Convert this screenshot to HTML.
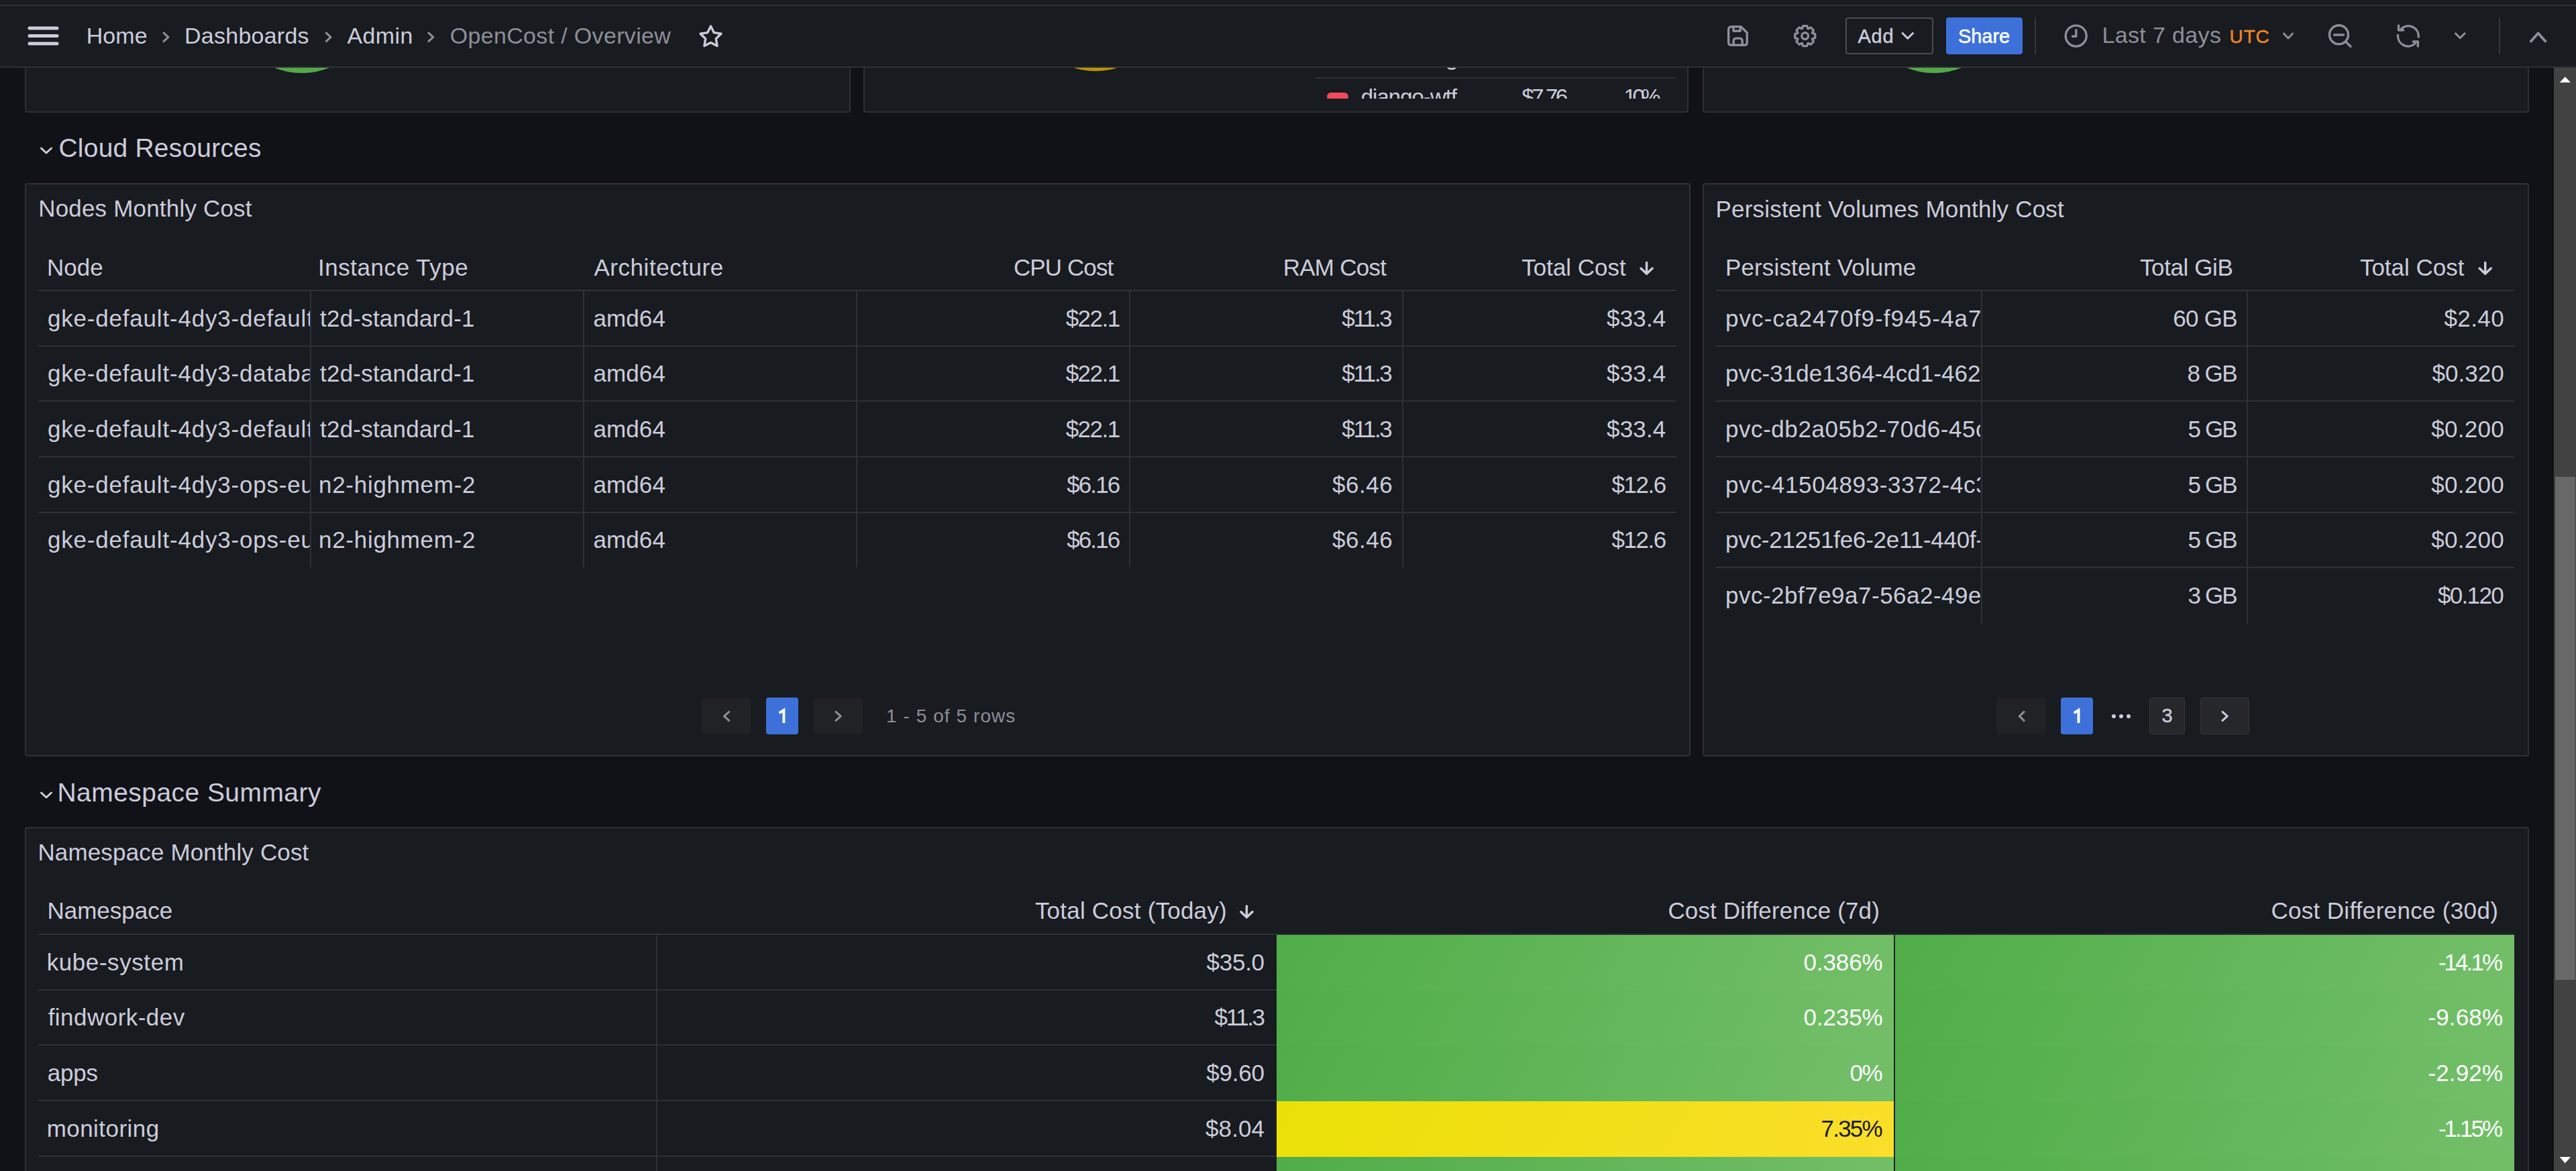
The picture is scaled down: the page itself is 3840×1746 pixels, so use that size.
<!DOCTYPE html>
<html><head><meta charset="utf-8"><style>
html,body{margin:0;padding:0;width:3840px;height:1746px;overflow:hidden;background:#111217;font-family:"Liberation Sans", sans-serif;-webkit-font-smoothing:antialiased;}
</style></head><body>
<div style="position:absolute;left:0;top:101px;width:3807px;height:1645px;overflow:hidden"><div style="position:absolute;left:0;top:-101px;width:3840px;height:1746px">
<div style="position:absolute;left:37px;top:-200px;width:1227px;height:364px;background:#181b1f;border:2px solid #2e3036;border-radius:4px;"></div>
<div style="position:absolute;left:1287px;top:-200px;width:1226px;height:364px;background:#181b1f;border:2px solid #2e3036;border-radius:4px;"></div>
<div style="position:absolute;left:2538px;top:-200px;width:1228px;height:364px;background:#181b1f;border:2px solid #2e3036;border-radius:4px;"></div>
<div style="position:absolute;left:340.5px;top:-109px;width:218px;height:218px;border-radius:50%;background:#55a64a"></div>
<div style="position:absolute;left:1527px;top:-106px;width:212px;height:212px;border-radius:50%;background:#b8940b"></div>
<div style="position:absolute;left:2774.3px;top:-109px;width:218px;height:218px;border-radius:50%;background:#55a64a"></div>
<div style="position:absolute;left:1960px;top:115px;width:537px;height:2px;background:#2e3036;"></div>
<div style="position:absolute;left:1287px;top:101px;width:1230px;height:46px;overflow:hidden"><div style="position:absolute;left:-1287px;top:-101px;width:3840px;height:300px">
<div style="position:absolute;left:1978px;top:138px;width:32px;height:12px;background:#f2495c;border-radius:6px;"></div>
<div style="position:absolute;left:2028.70px;top:127.75px;font-size:33px;line-height:33px;color:#ccccdc;white-space:pre;letter-spacing:-0.976px;">django-wtf</div>
<div style="position:absolute;left:2268.40px;top:127.75px;font-size:33px;line-height:33px;color:#ccccdc;white-space:pre;letter-spacing:-3.407px;">$7.76</div>
<div style="position:absolute;left:2420.60px;top:127.75px;font-size:33px;line-height:33px;color:#ccccdc;white-space:pre;letter-spacing:-5.503px;">10%</div>
<div style="position:absolute;left:2154.50px;top:66.75px;font-size:35px;line-height:35px;color:#ccccdc;white-space:pre;">g</div>
</div></div>
<svg style="position:absolute;left:58px;top:214px" width="24" height="16" viewBox="58 214 24 16"><polyline points="61.5,221 69,228 76.5,221" fill="none" stroke="#ccccdc" stroke-width="3" stroke-linecap="round" stroke-linejoin="round"/></svg>
<div style="position:absolute;left:87.50px;top:200.85px;font-size:39px;line-height:39px;color:#ccccdc;white-space:pre;letter-spacing:0.204px;">Cloud Resources</div>
<div style="position:absolute;left:37px;top:273px;width:2479px;height:851px;background:#181b1f;border:2px solid #2e3036;border-radius:4px;"></div>
<div style="position:absolute;left:57.20px;top:293.25px;font-size:35px;line-height:35px;color:#ccccdc;white-space:pre;letter-spacing:0.187px;">Nodes Monthly Cost</div>
<div style="position:absolute;left:70.00px;top:380.75px;font-size:35px;line-height:35px;color:#ccccdc;white-space:pre;">Node</div>
<div style="position:absolute;left:474.00px;top:380.75px;font-size:35px;line-height:35px;color:#ccccdc;white-space:pre;letter-spacing:0.546px;">Instance Type</div>
<div style="position:absolute;left:885.40px;top:380.75px;font-size:35px;line-height:35px;color:#ccccdc;white-space:pre;letter-spacing:0.557px;">Architecture</div>
<div style="position:absolute;left:1511.00px;top:380.75px;font-size:35px;line-height:35px;color:#ccccdc;white-space:pre;letter-spacing:-0.909px;">CPU Cost</div>
<div style="position:absolute;left:1912.70px;top:380.75px;font-size:35px;line-height:35px;color:#ccccdc;white-space:pre;letter-spacing:-0.734px;">RAM Cost</div>
<div style="position:absolute;left:2268.30px;top:380.75px;font-size:35px;line-height:35px;color:#ccccdc;white-space:pre;letter-spacing:-0.033px;">Total Cost</div>
<svg style="position:absolute;left:2440px;top:382px" width="32" height="34" viewBox="2440 382 32 34"><path d="M2454.6,391.5 V408.3 M2446.0,400.1 L2454.6,408.3 L2463.2,400.1" fill="none" stroke="#ccccdc" stroke-width="3.5" stroke-linecap="round" stroke-linejoin="round"/></svg>
<div style="position:absolute;left:57px;top:432px;width:2442px;height:2px;background:#2e3036;"></div>
<div style="position:absolute;left:57px;top:434px;width:405px;height:82px;overflow:hidden"><div style="position:absolute;left:-57px;top:-434px"><div style="position:absolute;left:71.00px;top:456.55px;font-size:35px;line-height:35px;color:#ccccdc;white-space:pre;letter-spacing:0.800px;">gke-default-4dy3-default</div></div></div>
<div style="position:absolute;left:477.00px;top:456.55px;font-size:35px;line-height:35px;color:#ccccdc;white-space:pre;letter-spacing:0.218px;">t2d-standard-1</div>
<div style="position:absolute;left:884.60px;top:456.55px;font-size:35px;line-height:35px;color:#ccccdc;white-space:pre;letter-spacing:0.062px;">amd64</div>
<div style="position:absolute;left:1588.70px;top:456.55px;font-size:35px;line-height:35px;color:#ccccdc;white-space:pre;letter-spacing:-1.530px;">$22.1</div>
<div style="position:absolute;left:2000.30px;top:456.55px;font-size:35px;line-height:35px;color:#ccccdc;white-space:pre;letter-spacing:-2.381px;">$11.3</div>
<div style="position:absolute;left:2395.00px;top:456.55px;font-size:35px;line-height:35px;color:#ccccdc;white-space:pre;letter-spacing:0.170px;">$33.4</div>
<div style="position:absolute;left:57px;top:515px;width:2442px;height:2px;background:#2e3036;"></div>
<div style="position:absolute;left:57px;top:516px;width:405px;height:83px;overflow:hidden"><div style="position:absolute;left:-57px;top:-516px"><div style="position:absolute;left:71.00px;top:539.20px;font-size:35px;line-height:35px;color:#ccccdc;white-space:pre;letter-spacing:0.800px;">gke-default-4dy3-database</div></div></div>
<div style="position:absolute;left:477.00px;top:539.20px;font-size:35px;line-height:35px;color:#ccccdc;white-space:pre;letter-spacing:0.218px;">t2d-standard-1</div>
<div style="position:absolute;left:884.60px;top:539.20px;font-size:35px;line-height:35px;color:#ccccdc;white-space:pre;letter-spacing:0.062px;">amd64</div>
<div style="position:absolute;left:1588.70px;top:539.20px;font-size:35px;line-height:35px;color:#ccccdc;white-space:pre;letter-spacing:-1.530px;">$22.1</div>
<div style="position:absolute;left:2000.30px;top:539.20px;font-size:35px;line-height:35px;color:#ccccdc;white-space:pre;letter-spacing:-2.381px;">$11.3</div>
<div style="position:absolute;left:2395.00px;top:539.20px;font-size:35px;line-height:35px;color:#ccccdc;white-space:pre;letter-spacing:0.170px;">$33.4</div>
<div style="position:absolute;left:57px;top:597px;width:2442px;height:2px;background:#2e3036;"></div>
<div style="position:absolute;left:57px;top:599px;width:405px;height:82px;overflow:hidden"><div style="position:absolute;left:-57px;top:-599px"><div style="position:absolute;left:71.00px;top:621.85px;font-size:35px;line-height:35px;color:#ccccdc;white-space:pre;letter-spacing:0.800px;">gke-default-4dy3-default</div></div></div>
<div style="position:absolute;left:477.00px;top:621.85px;font-size:35px;line-height:35px;color:#ccccdc;white-space:pre;letter-spacing:0.218px;">t2d-standard-1</div>
<div style="position:absolute;left:884.60px;top:621.85px;font-size:35px;line-height:35px;color:#ccccdc;white-space:pre;letter-spacing:0.062px;">amd64</div>
<div style="position:absolute;left:1588.70px;top:621.85px;font-size:35px;line-height:35px;color:#ccccdc;white-space:pre;letter-spacing:-1.530px;">$22.1</div>
<div style="position:absolute;left:2000.30px;top:621.85px;font-size:35px;line-height:35px;color:#ccccdc;white-space:pre;letter-spacing:-2.381px;">$11.3</div>
<div style="position:absolute;left:2395.00px;top:621.85px;font-size:35px;line-height:35px;color:#ccccdc;white-space:pre;letter-spacing:0.170px;">$33.4</div>
<div style="position:absolute;left:57px;top:680px;width:2442px;height:2px;background:#2e3036;"></div>
<div style="position:absolute;left:57px;top:681px;width:405px;height:83px;overflow:hidden"><div style="position:absolute;left:-57px;top:-681px"><div style="position:absolute;left:71.00px;top:704.50px;font-size:35px;line-height:35px;color:#ccccdc;white-space:pre;letter-spacing:0.800px;">gke-default-4dy3-ops-eu</div></div></div>
<div style="position:absolute;left:475.00px;top:704.50px;font-size:35px;line-height:35px;color:#ccccdc;white-space:pre;letter-spacing:0.710px;">n2-highmem-2</div>
<div style="position:absolute;left:884.60px;top:704.50px;font-size:35px;line-height:35px;color:#ccccdc;white-space:pre;letter-spacing:0.062px;">amd64</div>
<div style="position:absolute;left:1590.20px;top:704.50px;font-size:35px;line-height:35px;color:#ccccdc;white-space:pre;letter-spacing:-1.905px;">$6.16</div>
<div style="position:absolute;left:1986.00px;top:704.50px;font-size:35px;line-height:35px;color:#ccccdc;white-space:pre;letter-spacing:0.545px;">$6.46</div>
<div style="position:absolute;left:2402.40px;top:704.50px;font-size:35px;line-height:35px;color:#ccccdc;white-space:pre;letter-spacing:-1.430px;">$12.6</div>
<div style="position:absolute;left:57px;top:763px;width:2442px;height:2px;background:#2e3036;"></div>
<div style="position:absolute;left:57px;top:764px;width:405px;height:83px;overflow:hidden"><div style="position:absolute;left:-57px;top:-764px"><div style="position:absolute;left:71.00px;top:787.15px;font-size:35px;line-height:35px;color:#ccccdc;white-space:pre;letter-spacing:0.800px;">gke-default-4dy3-ops-eu</div></div></div>
<div style="position:absolute;left:475.00px;top:787.15px;font-size:35px;line-height:35px;color:#ccccdc;white-space:pre;letter-spacing:0.710px;">n2-highmem-2</div>
<div style="position:absolute;left:884.60px;top:787.15px;font-size:35px;line-height:35px;color:#ccccdc;white-space:pre;letter-spacing:0.062px;">amd64</div>
<div style="position:absolute;left:1590.20px;top:787.15px;font-size:35px;line-height:35px;color:#ccccdc;white-space:pre;letter-spacing:-1.905px;">$6.16</div>
<div style="position:absolute;left:1986.00px;top:787.15px;font-size:35px;line-height:35px;color:#ccccdc;white-space:pre;letter-spacing:0.545px;">$6.46</div>
<div style="position:absolute;left:2402.40px;top:787.15px;font-size:35px;line-height:35px;color:#ccccdc;white-space:pre;letter-spacing:-1.430px;">$12.6</div>
<div style="position:absolute;left:462px;top:434px;width:2px;height:412px;background:#2e3036;"></div>
<div style="position:absolute;left:869px;top:434px;width:2px;height:412px;background:#2e3036;"></div>
<div style="position:absolute;left:1276px;top:434px;width:2px;height:412px;background:#2e3036;"></div>
<div style="position:absolute;left:1683px;top:434px;width:2px;height:412px;background:#2e3036;"></div>
<div style="position:absolute;left:2090px;top:434px;width:2px;height:412px;background:#2e3036;"></div>
<div style="position:absolute;left:1046px;top:1040px;width:73px;height:55px;background:#202226;border-radius:4px;"></div>
<svg style="position:absolute;left:1074px;top:1055px" width="20" height="26" viewBox="1074 1055 20 26"><polyline points="1086.7,1061.3 1079.5,1067.85 1086.7,1074.4" fill="none" stroke="#8e8e9a" stroke-width="3" stroke-linecap="round" stroke-linejoin="round"/></svg>
<div style="position:absolute;left:1142px;top:1040px;width:48px;height:55px;background:#3d71d9;border-radius:4px;"></div>
<svg style="position:absolute;left:1155px;top:1050px" width="24" height="34" viewBox="1155 1050 24 34"><path d="M1161.6,1063.2 L1168.4,1058.8 V1078" fill="none" stroke="#ffffff" stroke-width="3.9"/></svg>
<div style="position:absolute;left:1213px;top:1040px;width:73px;height:55px;background:#202226;border-radius:4px;"></div>
<svg style="position:absolute;left:1240px;top:1055px" width="20" height="26" viewBox="1240 1055 20 26"><polyline points="1246.0,1061.3 1253.3,1067.85 1246.0,1074.4" fill="none" stroke="#8e8e9a" stroke-width="3" stroke-linecap="round" stroke-linejoin="round"/></svg>
<div style="position:absolute;left:1321.00px;top:1053.70px;font-size:28px;line-height:28px;color:#8e8e9a;white-space:pre;letter-spacing:1.064px;">1 - 5 of 5 rows</div>
<div style="position:absolute;left:2538px;top:273px;width:1228px;height:851px;background:#181b1f;border:2px solid #2e3036;border-radius:4px;"></div>
<div style="position:absolute;left:2557.60px;top:293.85px;font-size:35px;line-height:35px;color:#ccccdc;white-space:pre;letter-spacing:0.186px;">Persistent Volumes Monthly Cost</div>
<div style="position:absolute;left:2572.00px;top:380.75px;font-size:35px;line-height:35px;color:#ccccdc;white-space:pre;letter-spacing:0.130px;">Persistent Volume</div>
<div style="position:absolute;left:3190.00px;top:380.75px;font-size:35px;line-height:35px;color:#ccccdc;white-space:pre;letter-spacing:-0.394px;">Total GiB</div>
<div style="position:absolute;left:3517.90px;top:380.75px;font-size:35px;line-height:35px;color:#ccccdc;white-space:pre;letter-spacing:-0.011px;">Total Cost</div>
<svg style="position:absolute;left:3690px;top:382px" width="32" height="34" viewBox="3690 382 32 34"><path d="M3704.7,391.5 V408.3 M3696.1,400.1 L3704.7,408.3 L3713.2999999999997,400.1" fill="none" stroke="#ccccdc" stroke-width="3.5" stroke-linecap="round" stroke-linejoin="round"/></svg>
<div style="position:absolute;left:2558px;top:432px;width:1190px;height:2px;background:#2e3036;"></div>
<div style="position:absolute;left:2558px;top:434px;width:394px;height:82px;overflow:hidden"><div style="position:absolute;left:-2558px;top:-434px"><div style="position:absolute;left:2572.00px;top:456.55px;font-size:35px;line-height:35px;color:#ccccdc;white-space:pre;letter-spacing:1.075px;">pvc-ca2470f9-f945-4a7b-9c1e</div></div></div>
<div style="position:absolute;left:3239.20px;top:456.55px;font-size:35px;line-height:35px;color:#ccccdc;white-space:pre;letter-spacing:-0.720px;">60 GB</div>
<div style="position:absolute;left:3643.40px;top:456.55px;font-size:35px;line-height:35px;color:#ccccdc;white-space:pre;letter-spacing:0.420px;">$2.40</div>
<div style="position:absolute;left:2558px;top:515px;width:1190px;height:2px;background:#2e3036;"></div>
<div style="position:absolute;left:2558px;top:516px;width:394px;height:83px;overflow:hidden"><div style="position:absolute;left:-2558px;top:-516px"><div style="position:absolute;left:2572.00px;top:539.20px;font-size:35px;line-height:35px;color:#ccccdc;white-space:pre;letter-spacing:0.051px;">pvc-31de1364-4cd1-4620-8a1b</div></div></div>
<div style="position:absolute;left:3260.60px;top:539.20px;font-size:35px;line-height:35px;color:#ccccdc;white-space:pre;letter-spacing:-1.605px;">8 GB</div>
<div style="position:absolute;left:3625.40px;top:539.20px;font-size:35px;line-height:35px;color:#ccccdc;white-space:pre;letter-spacing:0.043px;">$0.320</div>
<div style="position:absolute;left:2558px;top:597px;width:1190px;height:2px;background:#2e3036;"></div>
<div style="position:absolute;left:2558px;top:599px;width:394px;height:82px;overflow:hidden"><div style="position:absolute;left:-2558px;top:-599px"><div style="position:absolute;left:2572.00px;top:621.85px;font-size:35px;line-height:35px;color:#ccccdc;white-space:pre;letter-spacing:0.554px;">pvc-db2a05b2-70d6-45c1-8f</div></div></div>
<div style="position:absolute;left:3261.50px;top:621.85px;font-size:35px;line-height:35px;color:#ccccdc;white-space:pre;letter-spacing:-1.905px;">5 GB</div>
<div style="position:absolute;left:3624.20px;top:621.85px;font-size:35px;line-height:35px;color:#ccccdc;white-space:pre;letter-spacing:0.283px;">$0.200</div>
<div style="position:absolute;left:2558px;top:680px;width:1190px;height:2px;background:#2e3036;"></div>
<div style="position:absolute;left:2558px;top:681px;width:394px;height:83px;overflow:hidden"><div style="position:absolute;left:-2558px;top:-681px"><div style="position:absolute;left:2572.00px;top:704.50px;font-size:35px;line-height:35px;color:#ccccdc;white-space:pre;letter-spacing:0.659px;">pvc-41504893-3372-4c3a-91</div></div></div>
<div style="position:absolute;left:3261.50px;top:704.50px;font-size:35px;line-height:35px;color:#ccccdc;white-space:pre;letter-spacing:-1.905px;">5 GB</div>
<div style="position:absolute;left:3624.20px;top:704.50px;font-size:35px;line-height:35px;color:#ccccdc;white-space:pre;letter-spacing:0.283px;">$0.200</div>
<div style="position:absolute;left:2558px;top:763px;width:1190px;height:2px;background:#2e3036;"></div>
<div style="position:absolute;left:2558px;top:764px;width:394px;height:83px;overflow:hidden"><div style="position:absolute;left:-2558px;top:-764px"><div style="position:absolute;left:2572.00px;top:787.15px;font-size:35px;line-height:35px;color:#ccccdc;white-space:pre;letter-spacing:-0.242px;">pvc-21251fe6-2e11-440f-8b2</div></div></div>
<div style="position:absolute;left:3261.50px;top:787.15px;font-size:35px;line-height:35px;color:#ccccdc;white-space:pre;letter-spacing:-1.905px;">5 GB</div>
<div style="position:absolute;left:3624.20px;top:787.15px;font-size:35px;line-height:35px;color:#ccccdc;white-space:pre;letter-spacing:0.283px;">$0.200</div>
<div style="position:absolute;left:2558px;top:845px;width:1190px;height:2px;background:#2e3036;"></div>
<div style="position:absolute;left:2558px;top:847px;width:394px;height:82px;overflow:hidden"><div style="position:absolute;left:-2558px;top:-847px"><div style="position:absolute;left:2572.00px;top:869.80px;font-size:35px;line-height:35px;color:#ccccdc;white-space:pre;letter-spacing:0.490px;">pvc-2bf7e9a7-56a2-49e4-a1c</div></div></div>
<div style="position:absolute;left:3261.50px;top:869.80px;font-size:35px;line-height:35px;color:#ccccdc;white-space:pre;letter-spacing:-1.905px;">3 GB</div>
<div style="position:absolute;left:3634.00px;top:869.80px;font-size:35px;line-height:35px;color:#ccccdc;white-space:pre;letter-spacing:-1.677px;">$0.120</div>
<div style="position:absolute;left:2953px;top:434px;width:2px;height:496px;background:#2e3036;"></div>
<div style="position:absolute;left:3349px;top:434px;width:2px;height:496px;background:#2e3036;"></div>
<div style="position:absolute;left:2976.4px;top:1040px;width:72.40000000000009px;height:55px;background:#202226;border-radius:4px;"></div>
<svg style="position:absolute;left:3004px;top:1055px" width="19" height="26" viewBox="3004 1055 19 26"><polyline points="3017.1,1061.3 3010.3,1067.85 3017.1,1074.4" fill="none" stroke="#8e8e9a" stroke-width="3" stroke-linecap="round" stroke-linejoin="round"/></svg>
<div style="position:absolute;left:3072px;top:1040px;width:48.19999999999982px;height:55px;background:#3d71d9;border-radius:4px;"></div>
<svg style="position:absolute;left:3085px;top:1050px" width="24" height="34" viewBox="3085 1050 24 34"><path d="M3091.7,1063.2 L3098.5,1058.8 V1078" fill="none" stroke="#ffffff" stroke-width="3.9"/></svg>
<div style="position:absolute;left:3147.5px;top:1064.5px;width:6px;height:6px;background:#ccccdc;border-radius:50%;"></div>
<div style="position:absolute;left:3158.6px;top:1064.5px;width:6px;height:6px;background:#ccccdc;border-radius:50%;"></div>
<div style="position:absolute;left:3169.7px;top:1064.5px;width:6px;height:6px;background:#ccccdc;border-radius:50%;"></div>
<div style="position:absolute;left:3203.6px;top:1040px;width:51.40000000000009px;height:53px;background:#25272b;border:1px solid #34363b;border-radius:4px;"></div>
<div style="position:absolute;left:3222.40px;top:1053.35px;font-size:29px;line-height:29px;color:#ccccdc;white-space:pre;-webkit-text-stroke:0.4px #ccccdc;">3</div>
<div style="position:absolute;left:3280.4px;top:1040px;width:70.59999999999991px;height:53px;background:#25272b;border:1px solid #34363b;border-radius:4px;"></div>
<svg style="position:absolute;left:3307px;top:1055px" width="20" height="26" viewBox="3307 1055 20 26"><polyline points="3313.0,1061.3 3320.3,1067.85 3313.0,1074.4" fill="none" stroke="#ccccdc" stroke-width="3" stroke-linecap="round" stroke-linejoin="round"/></svg>
<svg style="position:absolute;left:58px;top:1175px" width="24" height="16" viewBox="58 1175 24 16"><polyline points="61.5,1182 69,1189 76.5,1182" fill="none" stroke="#ccccdc" stroke-width="3" stroke-linecap="round" stroke-linejoin="round"/></svg>
<div style="position:absolute;left:85.50px;top:1161.85px;font-size:39px;line-height:39px;color:#ccccdc;white-space:pre;letter-spacing:0.444px;">Namespace Summary</div>
<div style="position:absolute;left:37px;top:1233px;width:3729px;height:763px;background:#181b1f;border:2px solid #2e3036;border-radius:4px;"></div>
<div style="position:absolute;left:56.40px;top:1253.45px;font-size:35px;line-height:35px;color:#ccccdc;white-space:pre;letter-spacing:0.152px;">Namespace Monthly Cost</div>
<div style="position:absolute;left:70.50px;top:1340.25px;font-size:35px;line-height:35px;color:#ccccdc;white-space:pre;letter-spacing:-0.012px;">Namespace</div>
<div style="position:absolute;left:1542.90px;top:1340.25px;font-size:35px;line-height:35px;color:#ccccdc;white-space:pre;letter-spacing:0.218px;">Total Cost (Today)</div>
<svg style="position:absolute;left:1844px;top:1342px" width="32" height="34" viewBox="1844 1342 32 34"><path d="M1858.4,1351 V1367.8 M1849.8000000000002,1359.6 L1858.4,1367.8 L1867.0,1359.6" fill="none" stroke="#ccccdc" stroke-width="3.5" stroke-linecap="round" stroke-linejoin="round"/></svg>
<div style="position:absolute;left:2486.40px;top:1340.25px;font-size:35px;line-height:35px;color:#ccccdc;white-space:pre;letter-spacing:0.153px;">Cost Difference (7d)</div>
<div style="position:absolute;left:3385.40px;top:1340.25px;font-size:35px;line-height:35px;color:#ccccdc;white-space:pre;letter-spacing:0.323px;">Cost Difference (30d)</div>
<div style="position:absolute;left:57px;top:1392px;width:3691px;height:2px;background:#2e3036;"></div>
<div style="position:absolute;left:1903px;top:1394px;width:920px;height:83px;background:linear-gradient(120deg, #50ad48, #73bf69);"></div>
<div style="position:absolute;left:2825px;top:1394px;width:923px;height:83px;background:linear-gradient(120deg, #50ad48, #73bf69);"></div>
<div style="position:absolute;left:69.70px;top:1416.55px;font-size:35px;line-height:35px;color:#ccccdc;white-space:pre;letter-spacing:0.576px;">kube-system</div>
<div style="position:absolute;left:1798.60px;top:1416.55px;font-size:35px;line-height:35px;color:#ccccdc;white-space:pre;letter-spacing:-0.280px;">$35.0</div>
<div style="position:absolute;left:2688.50px;top:1416.55px;font-size:35px;line-height:35px;color:#ffffff;white-space:pre;letter-spacing:-0.117px;">0.386%</div>
<div style="position:absolute;left:3634.90px;top:1416.55px;font-size:35px;line-height:35px;color:#ffffff;white-space:pre;letter-spacing:-2.955px;">-14.1%</div>
<div style="position:absolute;left:57px;top:1475px;width:1846px;height:2px;background:#2e3036;"></div>
<div style="position:absolute;left:1903px;top:1477px;width:920px;height:82px;background:linear-gradient(120deg, #50ad48, #73bf69);"></div>
<div style="position:absolute;left:2825px;top:1477px;width:923px;height:82px;background:linear-gradient(120deg, #50ad48, #73bf69);"></div>
<div style="position:absolute;left:71.70px;top:1499.20px;font-size:35px;line-height:35px;color:#ccccdc;white-space:pre;letter-spacing:0.462px;">findwork-dev</div>
<div style="position:absolute;left:1810.60px;top:1499.20px;font-size:35px;line-height:35px;color:#ccccdc;white-space:pre;letter-spacing:-2.381px;">$11.3</div>
<div style="position:absolute;left:2688.50px;top:1499.20px;font-size:35px;line-height:35px;color:#ffffff;white-space:pre;letter-spacing:-0.117px;">0.235%</div>
<div style="position:absolute;left:3619.50px;top:1499.20px;font-size:35px;line-height:35px;color:#ffffff;white-space:pre;letter-spacing:0.125px;">-9.68%</div>
<div style="position:absolute;left:57px;top:1557px;width:1846px;height:2px;background:#2e3036;"></div>
<div style="position:absolute;left:1903px;top:1559px;width:920px;height:83px;background:linear-gradient(120deg, #50ad48, #73bf69);"></div>
<div style="position:absolute;left:2825px;top:1559px;width:923px;height:83px;background:linear-gradient(120deg, #50ad48, #73bf69);"></div>
<div style="position:absolute;left:70.70px;top:1581.85px;font-size:35px;line-height:35px;color:#ccccdc;white-space:pre;letter-spacing:-0.199px;">apps</div>
<div style="position:absolute;left:1798.20px;top:1581.85px;font-size:35px;line-height:35px;color:#ccccdc;white-space:pre;letter-spacing:-0.180px;">$9.60</div>
<div style="position:absolute;left:2757.50px;top:1581.85px;font-size:35px;line-height:35px;color:#ffffff;white-space:pre;letter-spacing:-1.465px;">0%</div>
<div style="position:absolute;left:3619.50px;top:1581.85px;font-size:35px;line-height:35px;color:#ffffff;white-space:pre;letter-spacing:0.125px;">-2.92%</div>
<div style="position:absolute;left:57px;top:1640px;width:1846px;height:2px;background:#2e3036;"></div>
<div style="position:absolute;left:1903px;top:1642px;width:920px;height:83px;background:linear-gradient(120deg, #eae006, #fade2a);"></div>
<div style="position:absolute;left:2825px;top:1642px;width:923px;height:83px;background:linear-gradient(120deg, #50ad48, #73bf69);"></div>
<div style="position:absolute;left:69.70px;top:1664.50px;font-size:35px;line-height:35px;color:#ccccdc;white-space:pre;letter-spacing:0.450px;">monitoring</div>
<div style="position:absolute;left:1797.00px;top:1664.50px;font-size:35px;line-height:35px;color:#ccccdc;white-space:pre;letter-spacing:0.120px;">$8.04</div>
<div style="position:absolute;left:2714.50px;top:1664.50px;font-size:35px;line-height:35px;color:#1b1b1b;white-space:pre;letter-spacing:-1.780px;">7.35%</div>
<div style="position:absolute;left:3634.90px;top:1664.50px;font-size:35px;line-height:35px;color:#ffffff;white-space:pre;letter-spacing:-2.955px;">-1.15%</div>
<div style="position:absolute;left:57px;top:1723px;width:1846px;height:2px;background:#2e3036;"></div>
<div style="position:absolute;left:1903px;top:1725px;width:920px;height:82px;background:linear-gradient(120deg, #50ad48, #73bf69);"></div>
<div style="position:absolute;left:2825px;top:1725px;width:923px;height:82px;background:linear-gradient(120deg, #50ad48, #73bf69);"></div>
<div style="position:absolute;left:57px;top:1805px;width:1846px;height:2px;background:#2e3036;"></div>
<div style="position:absolute;left:978px;top:1394px;width:2px;height:400px;background:#2e3036;"></div>
<div style="position:absolute;left:2823px;top:1394px;width:2px;height:400px;background:#202328;"></div>
</div></div>
<div style="position:absolute;left:0px;top:0px;width:3840px;height:99px;background:#181b1f;"></div>
<div style="position:absolute;left:0px;top:7px;width:3840px;height:2px;background:#2f3136;"></div>
<div style="position:absolute;left:0px;top:99px;width:3840px;height:2px;background:#2e3036;"></div>
<svg style="position:absolute;left:38px;top:36px" width="54" height="34" viewBox="38 36 54 34"><line x1="44" y1="42" x2="85" y2="42" stroke="#ccccdc" stroke-width="5" stroke-linecap="round"/><line x1="44" y1="53.5" x2="85" y2="53.5" stroke="#ccccdc" stroke-width="5" stroke-linecap="round"/><line x1="44" y1="65" x2="85" y2="65" stroke="#ccccdc" stroke-width="5" stroke-linecap="round"/></svg>
<div style="position:absolute;left:128.70px;top:36.10px;font-size:34px;line-height:34px;color:#ccccdc;white-space:pre;letter-spacing:0.072px;">Home</div>
<svg style="position:absolute;left:238px;top:43px" width="19" height="25" viewBox="238 43 19 25"><polyline points="244.0,49.1 250.9,55.400000000000006 244.0,61.7" fill="none" stroke="#8e8e9a" stroke-width="3" stroke-linecap="round" stroke-linejoin="round"/></svg>
<div style="position:absolute;left:275.00px;top:36.10px;font-size:34px;line-height:34px;color:#ccccdc;white-space:pre;letter-spacing:0.252px;">Dashboards</div>
<svg style="position:absolute;left:480px;top:43px" width="19" height="25" viewBox="480 43 19 25"><polyline points="486.3,49.1 493.0,55.400000000000006 486.3,61.7" fill="none" stroke="#8e8e9a" stroke-width="3" stroke-linecap="round" stroke-linejoin="round"/></svg>
<div style="position:absolute;left:517.40px;top:36.10px;font-size:34px;line-height:34px;color:#ccccdc;white-space:pre;letter-spacing:0.384px;">Admin</div>
<svg style="position:absolute;left:633px;top:43px" width="19" height="25" viewBox="633 43 19 25"><polyline points="638.9,49.1 645.7,55.400000000000006 638.9,61.7" fill="none" stroke="#8e8e9a" stroke-width="3" stroke-linecap="round" stroke-linejoin="round"/></svg>
<div style="position:absolute;left:670.70px;top:36.10px;font-size:34px;line-height:34px;color:#8e8e9a;white-space:pre;letter-spacing:0.335px;">OpenCost / Overview</div>
<svg style="position:absolute;left:1036px;top:32px" width="48" height="44" viewBox="1036 32 48 44"><polygon points="1059.50,39.00 1064.32,48.67 1075.00,50.26 1067.30,57.83 1069.08,68.49 1059.50,63.50 1049.92,68.49 1051.70,57.83 1044.00,50.26 1054.68,48.67" fill="none" stroke="#ccccdc" stroke-width="3.4" stroke-linejoin="round"/></svg>
<svg style="position:absolute;left:2570px;top:33px" width="42" height="42" viewBox="2570 33 42 42"><path d="M2581,39.7 H2595.2 L2604.3,48.8 V63 Q2604.3,67.3 2600,67.3 H2581 Q2576.7,67.3 2576.7,63 V44 Q2576.7,39.7 2581,39.7 Z M2584,40 V46.3 H2594.2 V40 M2584.2,67 V61.2 Q2584.2,57.1 2588.3,57.1 H2593.1 Q2597.2,57.1 2597.2,61.2 V67" fill="none" stroke="#8e8e9a" stroke-width="3.4" stroke-linejoin="round"/></svg>
<svg style="position:absolute;left:2668px;top:31px" width="46" height="46" viewBox="2668 31 46 46"><polygon points="2701.84,49.41 2705.70,50.56 2705.70,56.64 2701.84,57.79 2701.42,58.04 2701.54,58.51 2703.45,62.05 2699.15,66.35 2695.61,64.44 2695.14,64.32 2694.89,64.74 2693.74,68.60 2687.66,68.60 2686.51,64.74 2686.26,64.32 2685.79,64.44 2682.25,66.35 2677.95,62.05 2679.86,58.51 2679.98,58.04 2679.56,57.79 2675.70,56.64 2675.70,50.56 2679.56,49.41 2679.98,49.16 2679.86,48.69 2677.95,45.15 2682.25,40.85 2685.79,42.76 2686.26,42.88 2686.51,42.46 2687.66,38.60 2693.74,38.60 2694.89,42.46 2695.14,42.88 2695.61,42.76 2699.15,40.85 2703.45,45.15 2701.54,48.69 2701.42,49.16" fill="none" stroke="#8e8e9a" stroke-width="3.3" stroke-linejoin="round"/><circle cx="2690.7" cy="53.6" r="4.9" fill="none" stroke="#8e8e9a" stroke-width="3.3"/></svg>
<div style="position:absolute;left:2751px;top:26px;width:127px;height:51px;background:transparent;border:2px solid #4a4c52;border-radius:4px;"></div>
<div style="position:absolute;left:2769.50px;top:39.85px;font-size:29px;line-height:29px;color:#ccccdc;white-space:pre;letter-spacing:0.764px;-webkit-text-stroke:0.5px #ccccdc;">Add</div>
<svg style="position:absolute;left:2830px;top:44px" width="28" height="20" viewBox="2830 44 28 20"><polyline points="2836.1,49.5 2843.8,57.25 2851.5,49.5" fill="none" stroke="#ccccdc" stroke-width="3" stroke-linecap="round" stroke-linejoin="round"/></svg>
<div style="position:absolute;left:2901px;top:26px;width:114px;height:55px;background:#3d71d9;border-radius:4px;"></div>
<div style="position:absolute;left:2919.00px;top:40.35px;font-size:29px;line-height:29px;color:#ffffff;white-space:pre;letter-spacing:-0.064px;-webkit-text-stroke:0.5px #ffffff;">Share</div>
<div style="position:absolute;left:3033px;top:26px;width:2px;height:55px;background:#34363b;"></div>
<svg style="position:absolute;left:3072px;top:31px" width="46" height="46" viewBox="3072 31 46 46"><circle cx="3094.7" cy="53.6" r="15.5" fill="none" stroke="#8e8e9a" stroke-width="3.4"/><polyline points="3094.8,44.6 3094.8,54.2 3089.4,54.2" fill="none" stroke="#8e8e9a" stroke-width="3.4" stroke-linecap="round" stroke-linejoin="round"/></svg>
<div style="position:absolute;left:3133.40px;top:35.10px;font-size:34px;line-height:34px;color:#8e8e9a;white-space:pre;letter-spacing:0.372px;">Last 7 days</div>
<div style="position:absolute;left:3323.60px;top:41.20px;font-size:28px;line-height:28px;color:#ef8424;white-space:pre;letter-spacing:0.838px;-webkit-text-stroke:0.5px #ef8424;">UTC</div>
<svg style="position:absolute;left:3399px;top:44px" width="26" height="19" viewBox="3399 44 26 19"><polyline points="3404.5,50.2 3411.0,57.0 3417.5,50.2" fill="none" stroke="#8e8e9a" stroke-width="3" stroke-linecap="round" stroke-linejoin="round"/></svg>
<svg style="position:absolute;left:3466px;top:31px" width="46" height="46" viewBox="3466 31 46 46"><circle cx="3486.5" cy="51.8" r="14" fill="none" stroke="#8e8e9a" stroke-width="3.4"/><line x1="3479.5" y1="52" x2="3493.5" y2="52" stroke="#8e8e9a" stroke-width="3.4" stroke-linecap="round"/><line x1="3497" y1="62.5" x2="3504" y2="69.3" stroke="#8e8e9a" stroke-width="3.4" stroke-linecap="round"/></svg>
<svg style="position:absolute;left:3566px;top:30px" width="48" height="48" viewBox="3566 30 48 48"><path d="M3605.3,55 A15.3,15.3 0 0 0 3580,42.5 M3574.5,52.5 A15.3,15.3 0 0 0 3600,65 M3575.5,38 V45 H3582.5 M3604.3,69 V62 H3597.3" fill="none" stroke="#8e8e9a" stroke-width="3.4" stroke-linecap="round" stroke-linejoin="round"/></svg>
<svg style="position:absolute;left:3655px;top:44px" width="26" height="19" viewBox="3655 44 26 19"><polyline points="3660.5,49.9 3667.25,56.7 3674.0,49.9" fill="none" stroke="#8e8e9a" stroke-width="3" stroke-linecap="round" stroke-linejoin="round"/></svg>
<div style="position:absolute;left:3725px;top:26px;width:2px;height:55px;background:#34363b;"></div>
<svg style="position:absolute;left:3767px;top:44px" width="34" height="25" viewBox="3767 44 34 25"><polyline points="3772.9,61.5 3783.6000000000004,49.5 3794.3,61.5" fill="none" stroke="#8e8e9a" stroke-width="4" stroke-linecap="round" stroke-linejoin="round"/></svg>
<div style="position:absolute;left:3807px;top:101px;width:33px;height:1645px;background:#424242;"></div>
<div style="position:absolute;left:3809px;top:711px;width:30px;height:750px;background:#686868;"></div>
<svg style="position:absolute;left:3812px;top:110px" width="24" height="18" viewBox="3812 110 24 18"><polygon points="3815.6,123 3823.8,114.5 3832,123" fill="#ffffff"/></svg>
<svg style="position:absolute;left:3812px;top:1720px" width="24" height="18" viewBox="3812 1720 24 18"><polygon points="3815.6,1725 3823.8,1734.5 3832,1725" fill="#ffffff"/></svg>
</body></html>
